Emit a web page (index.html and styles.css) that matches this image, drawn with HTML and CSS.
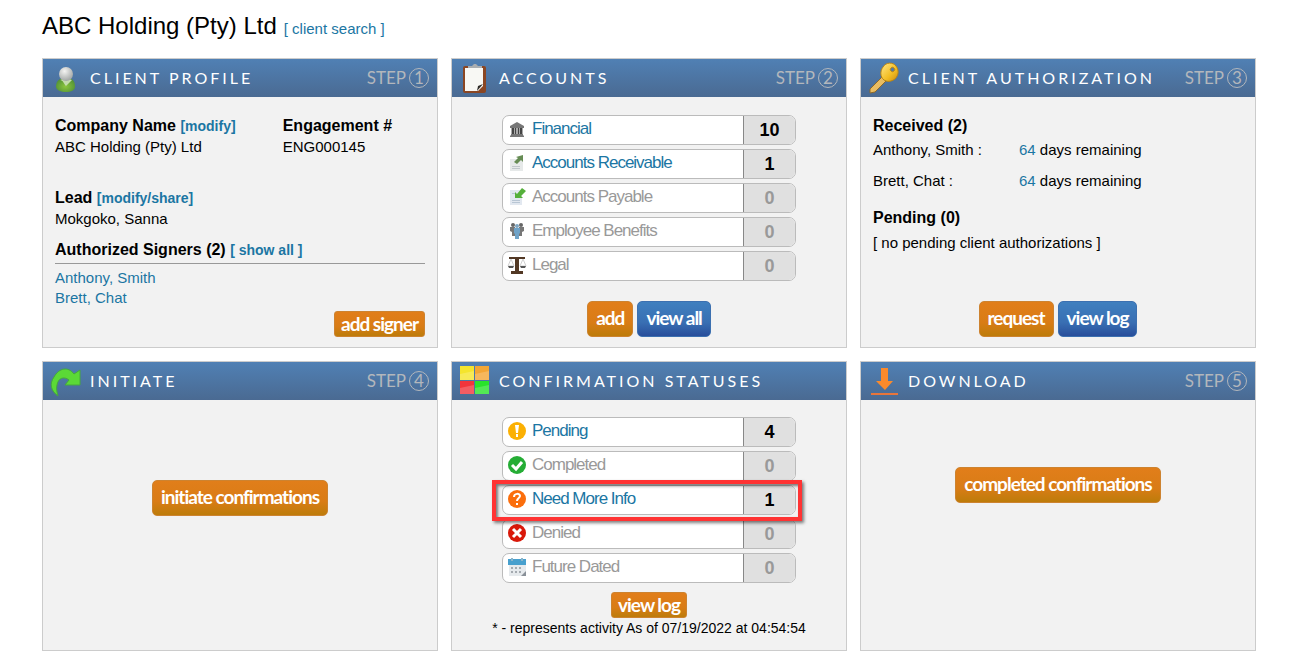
FILE: index.html
```html
<!DOCTYPE html>
<html lang="en">

<head>
    <meta charset="UTF-8">
    <meta name="viewport" content="width=device-width, initial-scale=1.0">
    <title>ABC Holding (Pty) Ltd</title>
    <link rel="stylesheet" href="styles.css">
</head>

<body>
    <header class="page-header">
        <h1>ABC Holding (Pty) Ltd</h1>
        <a href="#">[ client search ]</a>
    </header>

    <main class="dashboard">
        <section class="panel">
            <div class="panel-header">
                <svg class="panel-icon" viewBox="0 0 32 32">
                    <defs>
                        <radialGradient id="head" cx=".4" cy=".3" r=".7">
                            <stop offset="0" stop-color="#f4f4f2" />
                            <stop offset="1" stop-color="#a3a7a6" />
                        </radialGradient>
                        <radialGradient id="torso" cx=".5" cy=".6" r=".6">
                            <stop offset="0" stop-color="#8cc63e" />
                            <stop offset="1" stop-color="#4f8f35" />
                        </radialGradient>
                    </defs>
                    <path d="M6 25c0-6 3-9 10-9s9 3 9 9c0 3-4 5-9 5s-10-2-10-5z" fill="url(#torso)" />
                    <path d="M10 18c3 0 4 4 6 6 2-2 4-4 6-6l-6-2z" fill="#c4dcae" />
                    <ellipse cx="16" cy="12" rx="7" ry="7" fill="url(#head)" />
                </svg>
                <h2>Client Profile</h2>
                <span class="step">Step <span class="step-number">1</span></span>
            </div>
            <div class="panel-body">
                <div class="profile-row">
                    <div>
                        <h3>Company Name <a href="#">[modify]</a></h3>
                        <p>ABC Holding (Pty) Ltd</p>
                    </div>
                    <div>
                        <h3>Engagement #</h3>
                        <p>ENG000145</p>
                    </div>
                </div>
                <div class="lead">
                    <h3>Lead <a href="#">[modify/share]</a></h3>
                    <p>Mokgoko, Sanna</p>
                </div>
                <h3>Authorized Signers (2) <a href="#">[ show all ]</a></h3>
                <ul class="signers">
                    <li><a href="#">Anthony, Smith</a></li>
                    <li><a href="#">Brett, Chat</a></li>
                </ul>
                <div class="actions actions-right">
                    <button type="button" class="btn btn-small">add signer</button>
                </div>
            </div>
        </section>

        <section class="panel">
            <div class="panel-header">
                <svg class="panel-icon" viewBox="0 0 32 32">
                    <rect x="4" y="4" width="23" height="27" rx="2" fill="#8a4623" />
                    <path d="M6 6h18v18l-5 5H6z" fill="#f8f8f4" />
                    <path d="M24 22l-6 7 1-5z" fill="#2d2a26" />
                    <path d="M9 4h4l2-2h2l2 2h4v2H9z" fill="#a9adb0" />
                </svg>
                <h2>Accounts</h2>
                <span class="step">Step <span class="step-number">2</span></span>
            </div>
            <div class="panel-body">
                <ul class="counts">
                    <li>
                        <a href="#" class="count-name">
                            <svg viewBox="0 0 20 20">
                                <path d="M10 3l7 4v2H3V7z" fill="#777" />
                                <path d="M4 9h12v7H4z" fill="#aaa" />
                                <path d="M5 9h2v7H5zM8 9h1v7H8zM11 9h1v7h-1zM13 9h2v7h-2z" fill="#444" />
                                <path d="M4 15h12v1l1 1v1H3v-1l1-1z" fill="#777" />
                            </svg>
                            Financial
                        </a>
                        <span class="count">10</span>
                    </li>
                    <li>
                        <a href="#" class="count-name">
                            <svg viewBox="0 0 20 20">
                                <path d="M3 6h13v12H3z" fill="#e6e9e9" />
                                <path d="M5 13h8v1H5zM5 15h8v1H5z" fill="#c0c6cb" />
                                <path d="M9 4l7-2v7l-2-2-4 4-3-2 4-4z" fill="#668c54" />
                            </svg>
                            Accounts Receivable
                        </a>
                        <span class="count">1</span>
                    </li>
                    <li class="empty">
                        <a href="#" class="count-name">
                            <svg viewBox="0 0 20 20">
                                <path d="M3 3h12v15H3z" fill="#e2e8f0" />
                                <path d="M5 6h3v1H5zM5 13h8v1H5zM5 15h8v1H5z" fill="#b8c6d4" />
                                <path d="M8 11V5l2 2 5-6 4 3-5 5 2 2z" fill="#55b03b" />
                            </svg>
                            Accounts Payable
                        </a>
                        <span class="count">0</span>
                    </li>
                    <li class="empty">
                        <a href="#" class="count-name">
                            <svg viewBox="0 0 20 20">
                                <circle cx="6" cy="4" r="2" fill="#666" />
                                <circle cx="14" cy="4" r="2" fill="#666" />
                                <path d="M3 6h5v9H5v-4l-2-1zM12 6h5v4l-2 1v4h-3z" fill="#777" />
                                <circle cx="10" cy="5" r="2" fill="#7fa6c2" />
                                <path d="M7 7h6v5l-1 1v5H8v-5l-1-1z" fill="#6fa3c8" />
                            </svg>
                            Employee Benefits
                        </a>
                        <span class="count">0</span>
                    </li>
                    <li class="empty">
                        <a href="#" class="count-name">
                            <svg viewBox="0 0 20 20">
                                <path d="M2 2h16v2h-6v12h4v3H4v-3h4V4H2z" fill="#523824" />
                                <path d="M4 4l-3 7h6zM16 4l-3 7h6z" fill="none" stroke="#d0d0d0" />
                                <path d="M1 11h6l-1 2H2zM13 11h6l-1 2h-4z" fill="#555" />
                            </svg>
                            Legal
                        </a>
                        <span class="count">0</span>
                    </li>
                </ul>
                <div class="actions">
                    <button type="button" class="btn">add</button>
                    <button type="button" class="btn btn-blue">view all</button>
                </div>
            </div>
        </section>

        <section class="panel">
            <div class="panel-header">
                <svg class="panel-icon" viewBox="0 0 32 32">
                    <defs>
                        <linearGradient id="gold" x1="0" y1="0" x2="1" y2="1">
                            <stop offset="0" stop-color="#ffe88a" />
                            <stop offset=".6" stop-color="#f3bd22" />
                            <stop offset="1" stop-color="#c98a12" />
                        </linearGradient>
                    </defs>
                    <path d="M14 15l4 4-11 11-5 1v-4z" fill="#e9bd62" stroke="#8d6a2a" />
                    <path d="M15 5c3-5 10-5 13-1s3 9-1 13c-4 3-8 3-11 1-4-3-4-9-1-13zm8 1a2 2 0 1 0 3 3 2 2 0 0 0-3-3z"
                        fill="url(#gold)" stroke="#b98415" fill-rule="evenodd" />
                </svg>
                <h2>Client Authorization</h2>
                <span class="step">Step <span class="step-number">3</span></span>
            </div>
            <div class="panel-body">
                <h3>Received (2)</h3>
                <ul class="received">
                    <li><span>Anthony, Smith :</span><span><a href="#">64</a> days remaining</span></li>
                    <li><span>Brett, Chat :</span><span><a href="#">64</a> days remaining</span></li>
                </ul>
                <h3>Pending (0)</h3>
                <p class="no-pending">[ no pending client authorizations ]</p>
                <div class="actions">
                    <button type="button" class="btn">request</button>
                    <button type="button" class="btn btn-blue">view log</button>
                </div>
            </div>
        </section>

        <section class="panel">
            <div class="panel-header">
                <svg class="panel-icon" viewBox="0 0 32 32">
                    <path d="M8 31C1 26-1 19 4 12 9 3 18 1 24 9l6-4v15H15l4-5c-5-4-11-2-12 5-1 4 0 7 1 11z"
                        fill="#5bd936" stroke="#46a83c" />
                </svg>
                <h2>Initiate</h2>
                <span class="step">Step <span class="step-number">4</span></span>
            </div>
            <div class="panel-body initiate">
                <button type="button" class="btn">initiate confirmations</button>
            </div>
        </section>

        <section class="panel">
            <div class="panel-header">
                <svg class="panel-icon" viewBox="0 0 32 32">
                    <path d="M1 1h14v14H1z" fill="#f5e52c" />
                    <path d="M16 1h14v14H16z" fill="#f3a635" />
                    <path d="M1 16h14v13H1z" fill="#f2353c" />
                    <path d="M16 16h14v13H16z" fill="#29e32b" />
                    <path d="M1 9l14-3v9H1zM16 9l14-3v9H16zM1 23l14-3v9H1zM16 23l14-3v9H16z" fill="#fff"
                        opacity=".2" />
                </svg>
                <h2>Confirmation Statuses</h2>
            </div>
            <div class="panel-body statuses">
                <ul class="counts">
                    <li>
                        <a href="#" class="count-name">
                            <svg viewBox="0 0 20 20">
                                <circle cx="10" cy="10" r="9" fill="#fbb003" />
                                <path d="M8 4h4l-1 8H9zM9 13h2v3H9z" fill="#fff" />
                            </svg>
                            Pending
                        </a>
                        <span class="count">4</span>
                    </li>
                    <li class="empty">
                        <a href="#" class="count-name">
                            <svg viewBox="0 0 20 20">
                                <circle cx="10" cy="10" r="9" fill="#25ad35" />
                                <path d="M5 10l4 4 6-7" fill="none" stroke="#fff" stroke-width="3" />
                            </svg>
                            Completed
                        </a>
                        <span class="count">0</span>
                    </li>
                    <li class="highlight">
                        <a href="#" class="count-name">
                            <svg viewBox="0 0 20 20">
                                <circle cx="10" cy="10" r="9" fill="#fb6e0c" />
                                <path d="M7 8c0-4 6-4 6-1 0 2-3 2-3 5" fill="none" stroke="#fff" stroke-width="2" />
                                <path d="M9 14h2v2H9z" fill="#fff" />
                            </svg>
                            Need More Info
                        </a>
                        <span class="count">1</span>
                    </li>
                    <li class="empty">
                        <a href="#" class="count-name">
                            <svg viewBox="0 0 20 20">
                                <circle cx="10" cy="10" r="9" fill="#d91809" />
                                <path d="M6 6l8 8M14 6l-8 8" stroke="#fff" stroke-width="3" />
                            </svg>
                            Denied
                        </a>
                        <span class="count">0</span>
                    </li>
                    <li class="empty">
                        <a href="#" class="count-name">
                            <svg viewBox="0 0 20 20">
                                <path d="M2 3h17v16H2z" fill="#e6eaed" />
                                <path d="M1 2h18v6H1z" fill="#48a0ce" />
                                <path d="M4 1h2v3H4zM14 1h2v3h-2z" fill="#8db5ca" />
                                <path d="M4 10h2v2H4zM8 10h2v2H8zM12 10h2v2h-2zM4 14h2v2H4zM8 14h2v2H8zM12 14h2v2h-2z"
                                    fill="#a4aab0" />
                                <path d="M19 14v5h-5z" fill="#899098" />
                            </svg>
                            Future Dated
                        </a>
                        <span class="count">0</span>
                    </li>
                </ul>
                <button type="button" class="btn btn-small">view log</button>
                <p class="note">* - represents activity As of 07/19/2022 at 04:54:54</p>
            </div>
        </section>

        <section class="panel">
            <div class="panel-header">
                <svg class="panel-icon" viewBox="0 0 32 32">
                    <path d="M13 3h7v13h5l-8 9-9-9h5z" fill="#fb8a2c" />
                    <path d="M3 28h27v2H3z" fill="#e8753a" />
                </svg>
                <h2>Download</h2>
                <span class="step">Step <span class="step-number">5</span></span>
            </div>
            <div class="panel-body download">
                <button type="button" class="btn">completed confirmations</button>
            </div>
        </section>
    </main>
</body>

</html>
```
FILE: styles.css
```css
* {
    box-sizing: border-box;
}

body {
    margin: 0;
    padding: 10px 47px 12px 42px;
    font-family: "Liberation Sans", Arial, sans-serif;
    font-size: 15px;
    line-height: 20px;
    color: #000;
    background: #fff;
}

h1,
h2,
h3,
p,
ul {
    margin: 0;
    padding: 0;
}

ul {
    list-style: none;
}

a {
    color: #1b76a3;
    text-decoration: none;
}

.page-header {
    display: flex;
    align-items: baseline;
    gap: 7px;
    height: 48px;
}

h1 {
    font-size: 24px;
    font-weight: normal;
    line-height: 32px;
}

.dashboard {
    display: grid;
    grid-template-columns: repeat(3, 1fr);
    grid-auto-rows: minmax(290px, auto);
    gap: 13px;
}

.panel {
    display: flex;
    flex-direction: column;
    background: #f2f2f2;
    border: 1px solid #ccc;
}

.panel-header {
    display: flex;
    align-items: center;
    height: 38px;
    padding: 0 8px 0 7px;
    font-family: Lato, sans-serif;
    text-transform: uppercase;
    background: linear-gradient(#5080b4, #4a6a92);
}

.panel-icon {
    width: 32px;
    height: 32px;
    margin-right: 8px;
}

h2 {
    font-size: 16px;
    font-weight: normal;
    letter-spacing: 3px;
    color: #fff;
}

.step {
    display: flex;
    align-items: center;
    gap: 3px;
    margin-left: auto;
    font-size: 17px;
    color: #b3b7bc;
}

.step-number {
    width: 20px;
    height: 20px;
    border: 1px solid #b3b7bc;
    border-radius: 50%;
    line-height: 18px;
    text-align: center;
}

.panel-body {
    flex: 1;
    display: flex;
    flex-direction: column;
    padding: 18px 12px 10px;
}

h3 {
    font-size: 16px;
    line-height: 22px;
}

h3 a {
    font-size: 14px;
}

/* Client profile */
.profile-row {
    display: grid;
    grid-template-columns: 8fr 5fr;
}

.lead {
    margin: 30px 0 10px;
}

.signers {
    margin-top: 2px;
    padding-top: 4px;
    border-top: 1px solid #999;
}

/* Buttons */
.actions {
    display: flex;
    justify-content: center;
    gap: 4px;
    margin-top: auto;
}

.actions-right {
    justify-content: flex-end;
}

.btn {
    height: 36px;
    padding: 0 8px 3px;
    border: 1px solid #cd8330;
    border-radius: 5px;
    font-family: Lato, sans-serif;
    font-size: 19px;
    font-weight: bold;
    letter-spacing: -1px;
    color: #fff;
    background: linear-gradient(#e17e1a, #d97c16 60%, #bd7c0a);
    cursor: pointer;
}

.btn-blue {
    border-color: #3c70b0;
    background: linear-gradient(#3f7fbf, #396fb3 60%, #284e9b);
}

.btn-small {
    height: 26px;
    padding: 0 6px 3px;
    border-radius: 3px;
}

/* Rows with a count */
.counts {
    display: flex;
    flex-direction: column;
    gap: 4px;
    width: 294px;
    margin: 0 auto;
}

.counts li {
    position: relative;
    display: flex;
    height: 30px;
    border: 1px solid #bbb;
    border-radius: 7px;
    background: #fff;
}

.count-name {
    flex: 1;
    display: flex;
    align-items: center;
    padding: 0 4px 2px;
    font-size: 17px;
    letter-spacing: -1px;
}

.count-name svg {
    width: 20px;
    height: 20px;
    margin-right: 5px;
}

.count {
    width: 52px;
    border-left: 1px solid #888;
    border-radius: 0 6px 6px 0;
    font-size: 18px;
    font-weight: bold;
    line-height: 28px;
    text-align: center;
    background: #e0e0e0;
}

.empty .count-name,
.empty .count {
    color: #999;
}

.highlight::after {
    content: "";
    position: absolute;
    z-index: 1;
    inset: -6px -7px -7px -11px;
    border: 4px solid #f33;
    box-shadow: 2px 2px 3px rgba(0, 0, 0, 0.5), inset 2px 2px 3px rgba(0, 0, 0, 0.5);
    pointer-events: none;
}

/* Client authorization */
.received {
    display: grid;
    gap: 5px;
    margin-bottom: 13px;
}

.received li {
    display: grid;
    grid-template-columns: 146px 1fr;
    line-height: 26px;
}

.no-pending {
    margin-top: 4px;
}

.initiate,
.download,
.statuses {
    align-items: center;
}

.initiate {
    padding-top: 80px;
}

.download {
    padding-top: 67px;
}

.statuses {
    padding-top: 17px;
}

.statuses .btn {
    margin-top: 9px;
}

.note {
    font-size: 14px;
}
```
